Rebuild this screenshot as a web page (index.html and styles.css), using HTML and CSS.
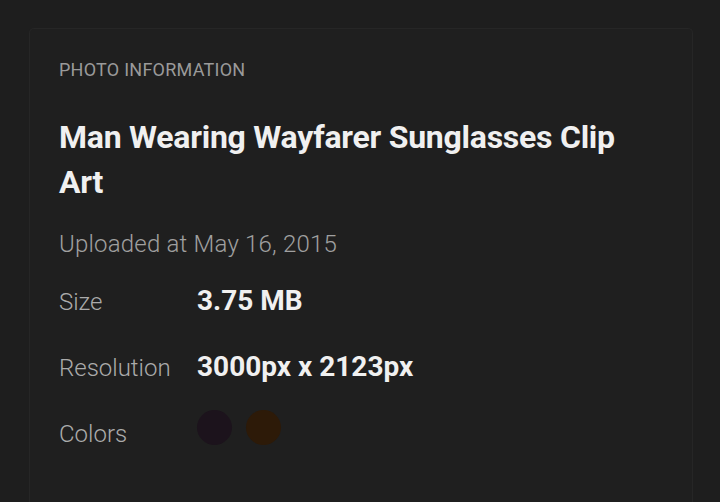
FILE: index.html
```html
<!DOCTYPE html>
<html>
<head>
<meta charset="utf-8">
<link rel="stylesheet" href="styles.css">
</head>
<body>
<section class="card">
  <h2 class="eyebrow">PHOTO INFORMATION</h2>
  <h1 class="title">Man Wearing Wayfarer Sunglasses Clip Art</h1>
  <p class="uploaded">Uploaded at May 16, 2015</p>
  <dl class="meta">
    <div class="row">
      <dt>Size</dt>
      <dd class="strong">3.75 MB</dd>
    </div>
    <div class="row">
      <dt>Resolution</dt>
      <dd class="strong">3000px x 2123px</dd>
    </div>
    <div class="row row-colors">
      <dt>Colors</dt>
      <dd class="swatches">
        <span class="swatch swatch-plum"></span>
        <span class="swatch swatch-brown"></span>
      </dd>
    </div>
  </dl>
</section>
</body>
</html>
```

FILE: styles.css
```css
html, body {
  margin: 0;
  padding: 0;
  background: #1e1e1e;
  height: 100%;
  overflow: hidden;
}
body {
  font-family: Roboto, "Liberation Sans", sans-serif;
  padding: 28px 27px 0 29px;
  box-sizing: border-box;
}
.card {
  border: 1px solid #262626;
  border-bottom: none;
  border-radius: 5px 5px 0 0;
  background: #1f1f1f;
  padding: 28px 29px 0 29px;
  height: 474px;
  box-sizing: border-box;
}
.eyebrow {
  margin: 0;
  font-size: 18px;
  font-weight: 400;
  letter-spacing: 0.25px;
  color: #9a9a9a;
  line-height: 26px;
}
.title {
  margin: 32px 0 0;
  font-size: 32px;
  font-weight: 700;
  line-height: 45px;
  letter-spacing: -0.25px;
  color: #f0f0f0;
}
.uploaded {
  margin: 24px 0 0;
  font-size: 24px;
  font-weight: 300;
  letter-spacing: 0.2px;
  color: #a0a0a0;
  line-height: 30px;
}
.meta {
  margin: 24px 0 0;
}
.row {
  display: flex;
  align-items: baseline;
  height: 65.5px;
}
.row-colors {
  align-items: flex-start;
  padding-top: 1.5px;
}
dt {
  width: 138px;
  flex: none;
  font-size: 24px;
  font-weight: 300;
  line-height: 36px;
  color: #ababab;
}
dd {
  margin: 0;
}
.strong {
  font-size: 28px;
  font-weight: 700;
  line-height: 36px;
  color: #f0f0f0;
}
.swatches {
  display: flex;
  gap: 14px;
  margin-top: -5.5px;
}
.swatch {
  width: 35px;
  height: 35px;
  border-radius: 50%;
  display: block;
}
.swatch-plum { background: #1c131c; }
.swatch-brown { background: #2d1a08; }
```
